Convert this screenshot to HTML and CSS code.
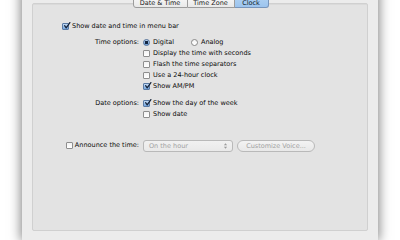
FILE: index.html
```html
<!DOCTYPE html>
<html>
<head>
<meta charset="utf-8">
<link rel="stylesheet" href="styles.css">
</head>
<body>
<div class="window">
  <div class="tabs">
    <div class="tab tab-first">Date &amp; Time</div>
    <div class="tab tab-mid">Time Zone</div>
    <div class="tab tab-last tab-active">Clock</div>
  </div>
  <div class="box">
    <div class="row menubar">
      <span class="cb checked"><svg viewBox="0 0 10 10" class="check"><path d="M2 4.6 L4 7.4 L8.6 0.8"/></svg></span>
      <span class="lbl">Show date and time in menu bar</span>
    </div>
    <div class="options">
      <div class="label">Time options:</div>
      <div class="row radios">
        <span class="radio-opt"><span class="radio on"></span><span class="lbl">Digital</span></span>
        <span class="radio-opt"><span class="radio"></span><span class="lbl">Analog</span></span>
      </div>
      <div></div>
      <div class="row"><span class="cb"></span><span class="lbl">Display the time with seconds</span></div>
      <div></div>
      <div class="row"><span class="cb"></span><span class="lbl">Flash the time separators</span></div>
      <div></div>
      <div class="row"><span class="cb"></span><span class="lbl">Use a 24-hour clock</span></div>
      <div></div>
      <div class="row"><span class="cb checked"><svg viewBox="0 0 10 10" class="check"><path d="M2 4.6 L4 7.4 L8.6 0.8"/></svg></span><span class="lbl">Show AM/PM</span></div>

      <div class="label gap">Date options:</div>
      <div class="row gap"><span class="cb checked"><svg viewBox="0 0 10 10" class="check"><path d="M2 4.6 L4 7.4 L8.6 0.8"/></svg></span><span class="lbl">Show the day of the week</span></div>
      <div></div>
      <div class="row"><span class="cb"></span><span class="lbl">Show date</span></div>

      <div class="label announce"><span class="cb"></span><span class="lbl">Announce the time:</span></div>
      <div class="row announce">
        <div class="popup"><span>On the hour</span><svg class="arrows" viewBox="0 0 6 10"><path d="M1 4 L3 1.5 L5 4 Z M1 6 L3 8.5 L5 6 Z"/></svg></div>
        <div class="button">Customize Voice...</div>
      </div>
    </div>
  </div>
</div>
</body>
</html>
```

FILE: styles.css
```css
html, body {
  margin: 0;
  padding: 0;
  background: #ffffff;
  height: 240px;
  overflow: hidden;
}
body {
  font-family: "DejaVu Sans", "Lucida Grande", sans-serif;
  font-size: 6.5px;
  color: #0a0a0a;
}
.window {
  margin: -11px 22px 0 22px;
  width: 356px;
  height: 251px;
  background: #ececec;
  box-shadow: 0 0 11px 1px rgba(0, 0, 0, 0.5);
  padding: 0 10px;
  box-sizing: border-box;
}
.tabs {
  display: flex;
  justify-content: center;
  position: relative;
  z-index: 1;
  height: 19px;
  padding-left: 1px;
}
.tab {
  height: 19px;
  box-sizing: border-box;
  display: flex;
  align-items: flex-end;
  justify-content: center;
  line-height: 7px;
  padding-bottom: 0;
  background: linear-gradient(#ffffff, #f3f3f3 60%, #e9e9e9);
  border: 1px solid #9c9c9c;
  border-left: none;
  color: #1a1a1a;
}
.tab-first {
  width: 55px;
  border-left: 1px solid #9c9c9c;
  border-radius: 0 0 0 3px;
}
.tab-mid {
  width: 47px;
}
.tab-last {
  width: 34px;
  border-radius: 0 0 3px 0;
}
.tab-active {
  background: linear-gradient(#d6e8fa, #a9cdf1 60%, #9cc4ee);
  border-color: #7795bb;
  color: #0e1a2c;
}
.box {
  margin-top: -5px;
  height: 228px;
  box-sizing: border-box;
  background: #e3e3e3;
  border: 1px solid #d0d0d0;
  box-shadow: inset 0 1px 0 #dadada;
  border-radius: 2px;
  padding-top: 17px;
}
.row {
  display: flex;
  align-items: center;
  height: 11px;
  line-height: 11px;
  white-space: nowrap;
}
.menubar {
  padding-left: 29px;
}
.lbl {
  margin-left: 3px;
}
.options {
  display: grid;
  grid-template-columns: 106px auto;
  column-gap: 4px;
  margin-top: 5px;
}
.label {
  text-align: right;
  height: 11px;
  line-height: 11px;
  white-space: nowrap;
}
.gap {
  margin-top: 6px;
}
.radios {
  gap: 0;
}
.radio-opt {
  display: flex;
  align-items: center;
  width: 48px;
}
.radio {
  width: 7px;
  height: 7px;
  box-sizing: border-box;
  border-radius: 50%;
  border: 1px solid #8a8a8a;
  background: linear-gradient(#f4f4f4, #ffffff);
  flex: none;
  position: relative;
}
.radio.on {
  border-color: #506f98;
  background: radial-gradient(circle at 50% 50%, #13253f 0 1.4px, transparent 1.8px), linear-gradient(#bcd6f3, #6fa2dc);
}
.cb {
  width: 7px;
  height: 7px;
  box-sizing: border-box;
  border: 1px solid #8e8e8e;
  border-radius: 1px;
  background: linear-gradient(#f2f2f2, #ffffff);
  flex: none;
  position: relative;
}
.cb.checked {
  border-color: #5a7aa4;
  background: linear-gradient(#c4dbf4, #74a6de);
}
.check {
  position: absolute;
  left: 0;
  top: -2px;
  width: 8px;
  height: 8px;
  overflow: visible;
}
.check path {
  fill: none;
  stroke: #16243a;
  stroke-width: 1.6;
  stroke-linecap: round;
  stroke-linejoin: round;
}
.label.announce {
  display: flex;
  align-items: center;
  justify-content: flex-end;
  margin-top: 19px;
  height: 13px;
}
.label.announce .lbl {
  margin-left: 2px;
}
.row.announce {
  margin-top: 19px;
  height: 13px;
  gap: 4px;
}
.popup {
  width: 90px;
  height: 12px;
  box-sizing: border-box;
  border: 1px solid #b9b9b9;
  border-radius: 3px;
  background: linear-gradient(#f1f1f1, #e9e9e9);
  color: #a2a2a2;
  display: flex;
  align-items: center;
  justify-content: space-between;
  padding: 0 4px 0 5px;
  line-height: 10px;
}
.arrows {
  width: 5px;
  height: 8px;
}
.arrows path {
  fill: #9a9a9a;
}
.button {
  width: 78px;
  height: 12px;
  box-sizing: border-box;
  border: 1px solid #b9b9b9;
  border-radius: 6px;
  background: linear-gradient(#f3f3f3, #e8e8e8);
  color: #a2a2a2;
  text-align: center;
  line-height: 10px;
}
```
